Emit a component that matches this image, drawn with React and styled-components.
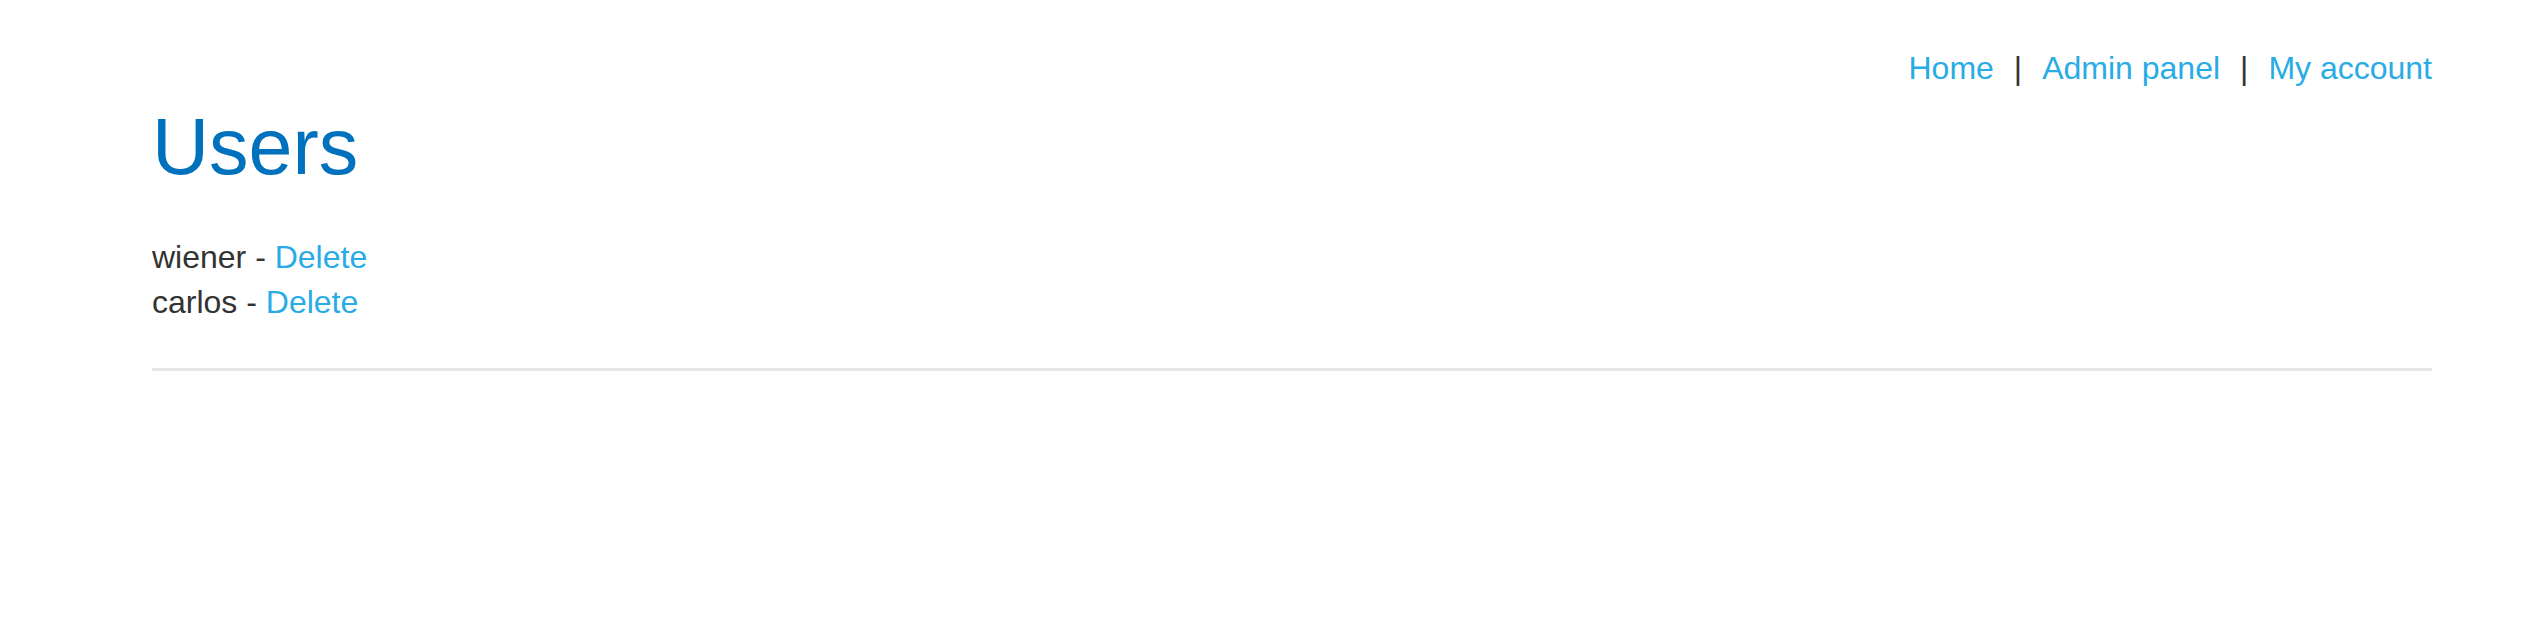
import React from 'react';
import styled, { createGlobalStyle } from 'styled-components';

const GlobalStyle = createGlobalStyle`
  html, body {
    margin: 0;
    padding: 0;
    background: #ffffff;
  }
  body {
    font-family: "Liberation Sans", Arial, sans-serif;
    color: #333332;
  }
`;

const Page = styled.div`
  width: 2280px;
  margin-left: 152px;
  padding-top: 49px;
`;

const TopLinks = styled.nav`
  display: flex;
  justify-content: flex-end;
  align-items: center;
  font-size: 32px;
  line-height: 38px;
`;

const Link = styled.a`
  color: #29ace5;
  text-decoration: none;
  cursor: pointer;
`;

const Sep = styled.span`
  color: #333332;
  margin: 0 20px;
`;

const Title = styled.h1`
  margin: 15px 0 0 0;
  font-size: 79px;
  line-height: 90px;
  font-weight: normal;
  color: #0071bc;
`;

const UserList = styled.div`
  margin-top: 43px;
  font-size: 32px;
  line-height: 45px;
`;

const UserRow = styled.div`
  color: #333332;
`;

const Divider = styled.hr`
  margin: 43px 0 0 0;
  border: none;
  height: 3px;
  background: #e6e6e6;
`;

const users = ['wiener', 'carlos'];

const App = () => {
  return (
    <>
      <GlobalStyle />
      <Page>
        <TopLinks>
          <Link href="#">Home</Link>
          <Sep>|</Sep>
          <Link href="#">Admin panel</Link>
          <Sep>|</Sep>
          <Link href="#">My account</Link>
        </TopLinks>
        <Title>Users</Title>
        <UserList>
          {users.map((u) => (
            <UserRow key={u}>
              {u} - <Link href="#">Delete</Link>
            </UserRow>
          ))}
        </UserList>
        <Divider />
      </Page>
    </>
  );
};

export default App;
